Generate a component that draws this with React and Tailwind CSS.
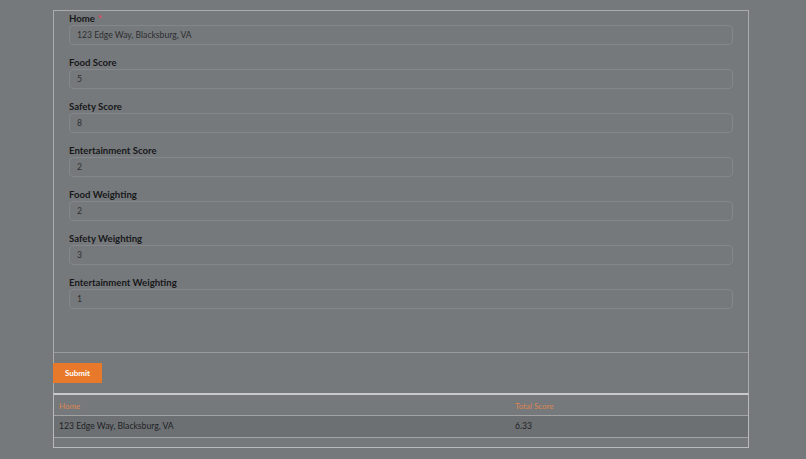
import React from "react";

const fields = [
  { label: "Home", value: "123 Edge Way, Blacksburg, VA", required: true },
  { label: "Food Score", value: "5" },
  { label: "Safety Score", value: "8" },
  { label: "Entertainment Score", value: "2" },
  { label: "Food Weighting", value: "2" },
  { label: "Safety Weighting", value: "3" },
  { label: "Entertainment Weighting", value: "1" },
];

export default function App() {
  return (
    <div
      className="min-h-[459px] w-full bg-[#76797c] pt-[10px]"
      style={{ fontFamily: "Lato, 'Open Sans', sans-serif" }}
    >
      <div className="ml-[53px] w-[696px]">
        <div className="border-x border-t border-[#a9abad]">
          <div className="border-b border-[#9a9c9e] px-[15px] pb-[43px] pt-[1px]">
            <div className="flex flex-col gap-[11px]">
              {fields.map((f) => (
                <div key={f.label} className="flex flex-col">
                  <div className="h-[13px] text-[9.6px] font-bold leading-[13px] text-[#17181a]">
                    {f.label}
                    {f.required && <span className="ml-[3px] text-[#e0445a]">*</span>}
                  </div>
                  <div className="flex h-[20px] items-center rounded-[4px] border border-[#83868a] bg-[#76797c] px-[7px] text-[8.6px] text-[#2c2e30]">
                    {f.value}
                  </div>
                </div>
              ))}
            </div>
          </div>
          <div className="py-[10px]">
            <button className="-ml-px flex h-[20px] w-[49px] items-center justify-center bg-[#e8792a] text-[8px] font-bold text-white">
              Submit
            </button>
          </div>
        </div>
        <div className="border-x border-b border-t-2 border-[#b8babc] border-t-[#c9cacb]">
          <div className="flex h-[21px] items-center border-b border-[#a0a2a4] pt-[1px] text-[8px] text-[#dc8550]">
            <div className="w-[456px] pl-[5px]">Home</div>
            <div className="pl-[5px]">Total Score</div>
          </div>
          <div className="flex h-[22px] items-center border-b border-[#a0a2a4] bg-[#6d7073] text-[8.6px] text-[#202224]">
            <div className="w-[456px] pl-[5px]">123 Edge Way, Blacksburg, VA</div>
            <div className="pl-[5px]">6.33</div>
          </div>
          <div className="h-[9px]" />
        </div>
      </div>
    </div>
  );
}
